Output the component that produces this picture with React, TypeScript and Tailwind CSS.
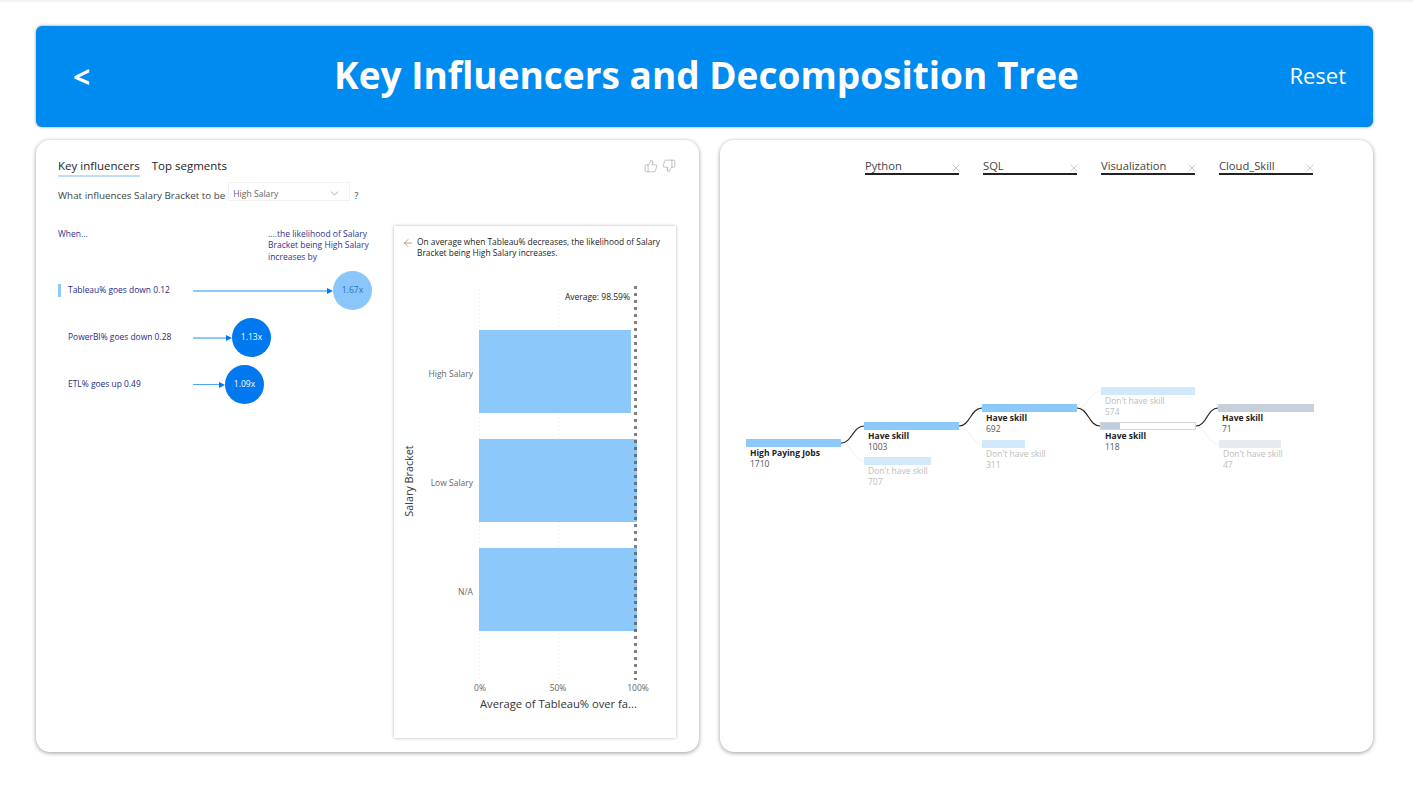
import { ArrowLeft, ChevronDown, ThumbsDown, ThumbsUp, X } from "lucide-react";

const fields = ["Python", "SQL", "Visualization", "Cloud_Skill"];

const influencers = [
  { label: "Tableau% goes down 0.12", value: "1.67x", active: true, line: "h-[2px] w-[134px] bg-[#8CC8F9]", circle: "bg-[#8AC6F9] text-[#2a6fc0]" },
  { label: "PowerBI% goes down 0.28", value: "1.13x", active: false, line: "h-[2px] w-[33px] bg-[#8CC8F9]", circle: "bg-[#0078EF] text-white" },
  { label: "ETL% goes up 0.49", value: "1.09x", active: false, line: "h-px w-[26px] bg-[#4ea5f5]", circle: "bg-[#0078EF] text-white" },
];

const nodes = [
  { title: "High Paying Jobs", count: "1710", box: "left-[26px] top-[299px]", bar: "w-[95px] bg-[#8CC8F9]", bold: true },
  { title: "Have skill", count: "1003", box: "left-[144px] top-[282px]", bar: "w-[95px] bg-[#8CC8F9]", bold: true },
  { title: "Don't have skill", count: "707", box: "left-[144px] top-[317px]", bar: "w-[67px] bg-[#D2E8FB]", bold: false },
  { title: "Have skill", count: "692", box: "left-[262px] top-[264px]", bar: "w-[95px] bg-[#8CC8F9]", bold: true },
  { title: "Don't have skill", count: "311", box: "left-[262px] top-[300px]", bar: "w-[43px] bg-[#D2E8FB]", bold: false },
  { title: "Don't have skill", count: "574", box: "left-[381px] top-[247px]", bar: "w-[94px] bg-[#D2E8FB]", bold: false },
  { title: "Have skill", count: "71", box: "left-[498px] top-[264px]", bar: "w-[96px] bg-[#C5D0DA]", bold: true },
  { title: "Don't have skill", count: "47", box: "left-[499px] top-[300px]", bar: "w-[62px] bg-[#E8EBEE]", bold: false },
];

function Bubble({ item }: { item: (typeof influencers)[number] }) {
  return (
    <div className="flex h-[39px] items-center">
      <div className={`h-[13px] w-[3px] ${item.active ? "bg-[#8CC8F9]" : ""}`} />
      <div className="ml-[7px] w-[125px] text-[8.45px] whitespace-nowrap text-[#1f2a80]">{item.label}</div>
      <div className={item.line} />
      <div className="h-0 w-0 border-y-[3px] border-l-[6px] border-y-transparent border-l-[#0078EF]" />
      <div className={`flex h-[39px] w-[39px] items-center justify-center rounded-full text-[8.5px] ${item.circle}`}>
        {item.value}
      </div>
    </div>
  );
}

function TreeNode({ node }: { node: (typeof nodes)[number] }) {
  return (
    <div className={`absolute w-[100px] ${node.box}`}>
      <div className={`h-2 ${node.bar}`} />
      <div className={`mt-px pl-1 text-[8.5px] leading-[10.5px] whitespace-nowrap ${node.bold ? "text-[#222]" : "text-[#bdbdbd]"}`}>
        <div className={node.bold ? "font-bold" : ""}>{node.title}</div>
        <div className={node.bold ? "text-[#555]" : ""}>{node.count}</div>
      </div>
    </div>
  );
}

function SalaryChart() {
  return (
    <svg width="282" height="453" viewBox="394 285 282 453" className="block">
      <line x1="479.5" y1="290" x2="479.5" y2="680" stroke="#e6e6e6" strokeDasharray="1 3" />
      <line x1="558.5" y1="290" x2="558.5" y2="680" stroke="#e6e6e6" strokeDasharray="1 3" />
      <rect x="479" y="330" width="152" height="83" fill="#8CC8F9" />
      <rect x="479" y="439" width="158" height="83" fill="#8CC8F9" />
      <rect x="479" y="548" width="158" height="83" fill="#8CC8F9" />
      <line x1="635.5" y1="286" x2="635.5" y2="680" stroke="#555" strokeOpacity="0.75" strokeWidth="3" strokeDasharray="3 4" />
      <text x="630" y="300" textAnchor="end" fontSize="8.5" fill="#222">Average: 98.59%</text>
      <g fontSize="8.5" fill="#666" textAnchor="end">
        <text x="473" y="377">High Salary</text>
        <text x="473" y="486">Low Salary</text>
        <text x="473" y="595">N/A</text>
      </g>
      <g fontSize="8.5" fill="#666" textAnchor="middle">
        <text x="480" y="691">0%</text>
        <text x="558" y="691">50%</text>
        <text x="638" y="691">100%</text>
      </g>
      <text x="480" y="708" fontSize="11.2" fill="#333">Average of Tableau% over fa...</text>
      <text x="413" y="481" fontSize="10.8" fill="#333" textAnchor="middle" transform="rotate(-90 413 481)">Salary Bracket</text>
    </svg>
  );
}

function DecompositionTree() {
  return (
    <div className="absolute inset-0">
      <svg width="653" height="612" className="absolute top-0 left-0" fill="none" strokeWidth="1.2">
        <g stroke="#f5f5f5">
          <path d="M121 303 C132 303 133 321 144 321" />
          <path d="M239 286 C250 286 251 304 262 304" />
          <path d="M357 268 C368 268 370 251 381 251" />
          <path d="M475 286 C486 286 487 304 499 304" />
        </g>
        <g stroke="#222">
          <path d="M121 303 C132 303 133 286 144 286" />
          <path d="M239 286 C250 286 251 268 262 268" />
          <path d="M357 268 C368 268 369 286 380 286" />
          <path d="M476 286 C487 286 487 268 498 268" />
        </g>
      </svg>
      {nodes.map((node, i) => (
        <TreeNode key={i} node={node} />
      ))}
      <div className="absolute top-[282px] left-[380px] w-[100px]">
        <div className="h-2 w-[96px] border border-[#d4d4d4] bg-white">
          <div className="h-full w-[19px] bg-[#BCCFE0]" />
        </div>
        <div className="mt-px pl-[5px] text-[8.5px] leading-[10.5px] whitespace-nowrap text-[#222]">
          <div className="font-bold">Have skill</div>
          <div className="text-[#555]">118</div>
        </div>
      </div>
    </div>
  );
}

export default function App() {
  return (
    <div className="h-[792px] overflow-hidden border-t-2 border-[#f4f4f4] bg-white pt-[24px] pr-[40px] pl-[36px] font-['Open_Sans',sans-serif]">
      {/* Header */}
      <header className="grid h-[101px] grid-cols-[1fr_auto_1fr] items-center rounded-md bg-[#008BF0] pr-[33px] pl-[37px] text-white shadow-[0_0_3px_rgba(0,0,0,0.45)]">
        <span className="text-[30px] font-bold">&lt;</span>
        <h1 className="-mt-[3px] text-[37px] font-bold">Key Influencers and Decomposition Tree</h1>
        <span className="-mt-[2px] -mr-[6px] justify-self-end text-[22px]">Reset</span>
      </header>

      <div className="mt-[13px] flex gap-[21px]">
        {/* Key influencers */}
        <section className="h-[612px] w-[663px] rounded-[14px] bg-white pt-[18px] pr-[23px] pl-[22px] shadow-[0_1px_4px_rgba(0,0,0,0.4)]">
          <div className="flex h-[20px] items-start justify-between">
            <div className="flex gap-3 text-[11.5px] leading-[16px] text-[#252423]">
              <span className="border-b-2 border-[#BFDDF7] pb-[1px]">Key influencers</span>
              <span>Top segments</span>
            </div>
            <div className="mt-[1px] flex gap-1 text-[#9a9a9a]">
              <ThumbsUp size={14} strokeWidth={1} />
              <ThumbsDown size={14} strokeWidth={1} />
            </div>
          </div>
          <div className="mt-[3px] flex items-center text-[9.85px] text-[#444]">
            <span className="mt-[7px]">What influences Salary Bracket to be</span>
            <div className="mr-1 ml-[3px] flex h-[19px] w-[122px] items-center justify-between border border-[#f2f2f2] pr-2 pl-1 text-[8.6px] text-[#666]">
              <span className="mt-[5px]">High Salary</span>
              <ChevronDown size={13} strokeWidth={1} className="mt-[3px]" />
            </div>
            <span className="mt-[7px]">?</span>
          </div>

          <div className="mt-[23px] flex">
            <div className="w-[336px] pt-[2px]">
              <div className="flex text-[8.5px] leading-[11.5px] text-[#2f3590]">
                <span className="w-[210px]">When...</span>
                <span className="w-[108px]">....the likelihood of Salary Bracket being High Salary increases by</span>
              </div>
              <div className="mt-[9px] flex flex-col gap-2">
                {influencers.map((item) => (
                  <Bubble key={item.label} item={item} />
                ))}
              </div>
            </div>

            <div className="h-[512px] w-[282px] bg-white shadow-[0_0_3px_rgba(0,0,0,0.3)]">
              <div className="flex h-[59px] gap-[3px] pt-[10px] pl-2 text-[8.4px] leading-[11px] text-[#252423]">
                <ArrowLeft size={12} strokeWidth={1.2} className="mt-[1px] shrink-0 text-[#a8622a]" />
                <span className="w-[255px]">On average when Tableau% decreases, the likelihood of Salary Bracket being High Salary increases.</span>
              </div>
              <SalaryChart />
            </div>
          </div>
        </section>

        {/* Decomposition tree */}
        <section className="relative h-[612px] w-[653px] rounded-[14px] bg-white shadow-[0_1px_4px_rgba(0,0,0,0.4)]">
          <div className="flex gap-[24px] pt-[18px] pl-[145px]">
            {fields.map((field) => (
              <div key={field} className="flex h-[17px] w-[94px] items-center justify-between border-b-[2px] border-[#222] pt-px text-[11.2px] text-[#444]">
                {field}
                <X size={12} strokeWidth={1} className="mt-[3px] -mr-[3px] text-[#999]" />
              </div>
            ))}
          </div>
          <DecompositionTree />
        </section>
      </div>
    </div>
  );
}
